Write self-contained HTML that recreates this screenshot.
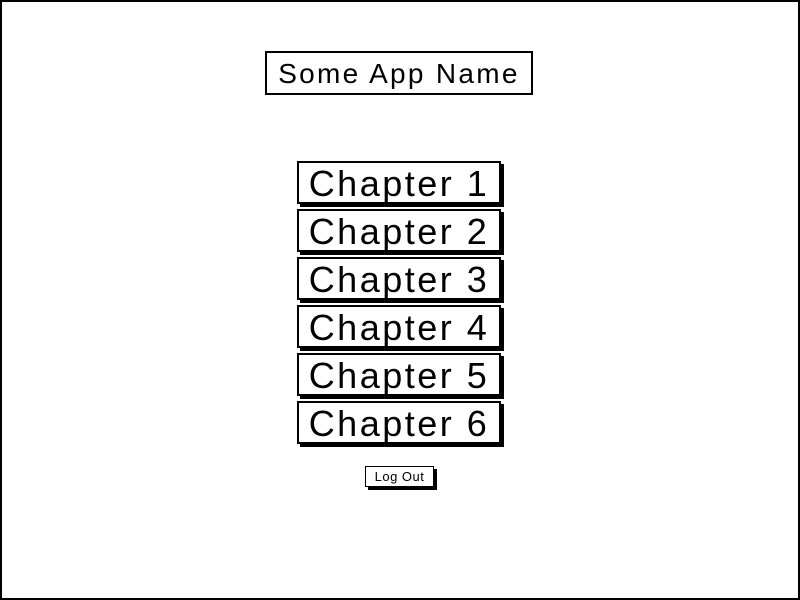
<!DOCTYPE html>
<html><head><style>
html,body{margin:0;padding:0;background:#fff;}
body{width:800px;height:600px;position:relative;overflow:hidden;font-family:"Liberation Sans",sans-serif;}
.frame{position:absolute;left:0;top:0;width:796px;height:596px;border:2px solid #000;}
.title{position:absolute;left:265px;top:51px;width:264px;height:40px;border:2px solid #000;font-size:28px;line-height:42px;text-align:center;color:#000;letter-spacing:2.3px;}
.btn{position:absolute;left:297px;width:200px;height:39px;border:2px solid #000;box-shadow:3px 3px 0 #000;background:#fff;font-size:36px;line-height:41px;text-align:center;color:#000;letter-spacing:2.5px;}
.lo{position:absolute;left:365px;top:466px;width:67px;height:19px;border:1.5px solid #000;box-shadow:3px 3px 0 #000;background:#fff;font-size:13px;line-height:19px;text-align:center;letter-spacing:0.5px;}
</style></head><body>
<div class="frame"></div>
<div class="title">Some App Name</div>
<div class="btn" style="top:161px">Chapter 1</div>
<div class="btn" style="top:209px">Chapter 2</div>
<div class="btn" style="top:257px">Chapter 3</div>
<div class="btn" style="top:305px">Chapter 4</div>
<div class="btn" style="top:353px">Chapter 5</div>
<div class="btn" style="top:401px">Chapter 6</div>
<div class="lo">Log Out</div>
</body></html>
